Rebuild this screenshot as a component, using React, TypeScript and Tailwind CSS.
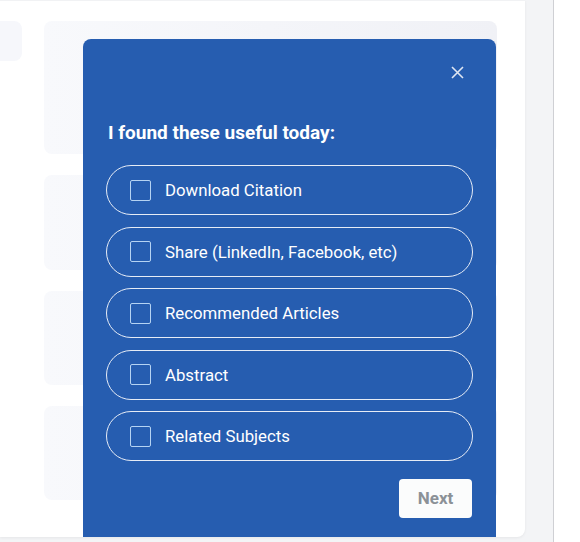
import { useState } from 'react'

const options = [
  'Download Citation',
  'Share (LinkedIn, Facebook, etc)',
  'Recommended Articles',
  'Abstract',
  'Related Subjects',
]

function Placeholder({ h }: { h: string }) {
  return <div className={`w-[453px] ${h} rounded-lg bg-gradient-to-r from-[#f8f9fc] to-[#f0f1f6]`} />
}

export default function App() {
  const [checked, setChecked] = useState<string[]>([])
  const toggle = (o: string) =>
    setChecked(c => (c.includes(o) ? c.filter(x => x !== o) : [...c, o]))

  return (
    <div className="flex w-[580px] h-[542px] bg-white overflow-hidden" style={{ fontFamily: 'Roboto, "Noto Sans", sans-serif' }}>
      <div className="w-[554px] h-full bg-[#f3f4f6] border-r border-[#cfd0d4] shrink-0">
        <div className="relative w-[525px] h-[537px] bg-white rounded-br-lg shadow-[0_1px_3px_rgba(0,0,0,0.06)] overflow-hidden border-t border-[#f1f2f4]">
          <div className="flex gap-[22px] pt-[20px]">
            <div className="w-[22px] h-[40px] rounded-r-lg bg-[#f6f7fb] shrink-0" />
            <div className="flex flex-col gap-[21px]">
              <Placeholder h="h-[133px]" />
              <Placeholder h="h-[95px]" />
              <Placeholder h="h-[94px]" />
              <Placeholder h="h-[94px]" />
            </div>
          </div>

          {/* feedback popup */}
          <div className="absolute left-[83px] top-[38px] w-[413px] bottom-0 bg-[#265db0] rounded-t-lg px-[23px] text-white">
            <div className="flex justify-end pt-[26px] pr-[9px]">
              <button className="w-[14px] h-[14px] flex items-center justify-center text-[#dfe6f2]">
                <svg width="13" height="13" viewBox="0 0 13 13" fill="none" stroke="currentColor" strokeWidth="1.6">
                  <path d="M1 1l11 11M12 1L1 12" />
                </svg>
              </button>
            </div>
            <h2 className="mt-[42px] text-[19px] leading-[24px] font-bold pl-[2px]">I found these useful today:</h2>
            <div className="mt-[20px] flex flex-col gap-[11.5px]">
              {options.map(o => (
                <label
                  key={o}
                  className="flex items-center h-[50px] rounded-full border border-[#e6ecf6] pl-[23px] cursor-pointer"
                >
                  <span
                    onClick={() => toggle(o)}
                    className={`w-[21px] h-[21px] rounded-[2px] border border-[#b5d3f3] shrink-0 ${checked.includes(o) ? 'bg-white' : ''}`}
                  />
                  <span className="ml-[14px] text-[16.8px] leading-[20px]">{o}</span>
                </label>
              ))}
            </div>
            <div className="flex justify-end mt-[18px] pr-[1px]">
              <button className="w-[73px] h-[39px] rounded-[4px] bg-[#fbfcfc] text-[#8b9197] text-[17px] font-bold">
                Next
              </button>
            </div>
          </div>
        </div>
      </div>
    </div>
  )
}
